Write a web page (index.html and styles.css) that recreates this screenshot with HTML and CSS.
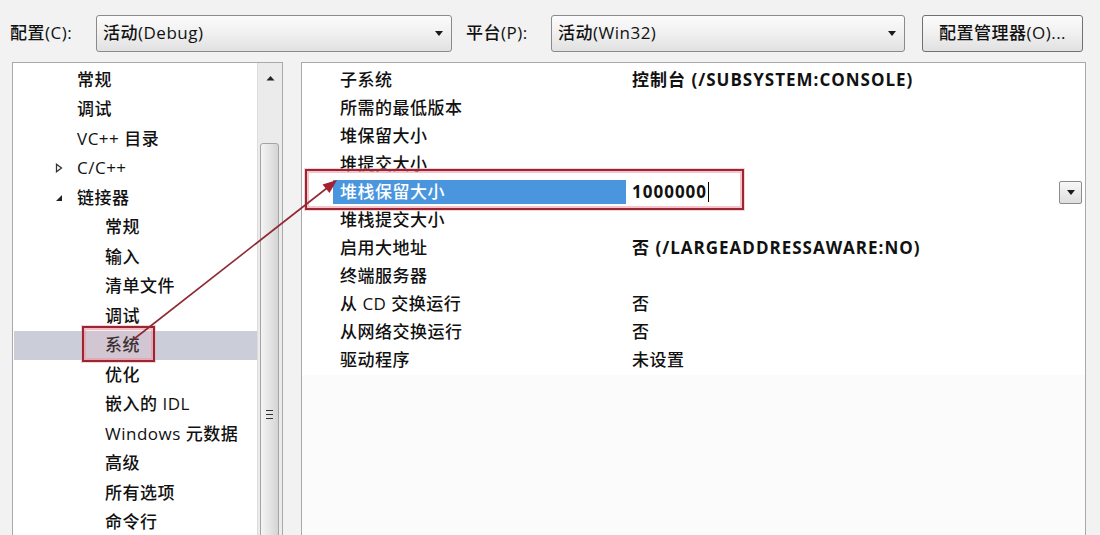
FILE: index.html
```html
<!DOCTYPE html>
<html lang="zh-CN">
<head>
    <meta charset="UTF-8">
    <title>属性页 - 链接器 系统</title>
    <link rel="stylesheet" href="styles.css">
</head>
<body>
<div class="toolbar">
    <span class="label label-config">配置(C):</span>
    <div class="combo combo-config"><span>活动(Debug)</span><i class="caret"></i></div>
    <span class="label label-platform">平台(P):</span>
    <div class="combo combo-platform"><span>活动(Win32)</span><i class="caret"></i></div>
    <div class="btn">配置管理器(O)...</div>
</div>
<div class="main">
    <div class="tree-panel">
        <ul class="tree">
            <li class="top">常规</li>
            <li class="top">调试</li>
            <li class="top">VC++ 目录</li>
            <li class="top"><span class="toggle"><svg width="8" height="10" viewBox="0 0 8 10"><path d="M1.5 1.2 L6.5 5 L1.5 8.8 Z" fill="none" stroke="#333" stroke-width="1.3"/></svg></span>C/C++</li>
            <li class="top"><span class="toggle"><svg width="8" height="8" viewBox="0 0 8 8"><path d="M7 1 L7 7 L1 7 Z" fill="#222"/></svg></span>链接器</li>
            <li class="sub">常规</li>
            <li class="sub">输入</li>
            <li class="sub">清单文件</li>
            <li class="sub">调试</li>
            <li class="sub active">系统</li>
            <li class="sub">优化</li>
            <li class="sub">嵌入的 IDL</li>
            <li class="sub">Windows 元数据</li>
            <li class="sub">高级</li>
            <li class="sub">所有选项</li>
            <li class="sub">命令行</li>
        </ul>
        <div class="scrollbar">
            <div class="sb-up"><svg width="9" height="6" viewBox="0 0 9 6"><path d="M0.5 5.5 L4.5 1 L8.5 5.5 Z" fill="#222"/></svg></div>
            <div class="sb-thumb"><span class="grip"></span></div>
        </div>
    </div>
    <div class="grid-panel">
        <div class="grid">
            <div class="row"><span class="name">子系统</span><span class="value strong">控制台 (/SUBSYSTEM:CONSOLE)</span></div>
            <div class="row"><span class="name">所需的最低版本</span><span class="value"></span></div>
            <div class="row"><span class="name">堆保留大小</span><span class="value"></span></div>
            <div class="row"><span class="name">堆提交大小</span><span class="value"></span></div>
            <div class="row selected"><span class="name">堆栈保留大小</span><span class="value strong">1000000<i class="cursor"></i></span><span class="drop"><i class="caret"></i></span></div>
            <div class="row"><span class="name">堆栈提交大小</span><span class="value"></span></div>
            <div class="row"><span class="name">启用大地址</span><span class="value strong">否 (/LARGEADDRESSAWARE:NO)</span></div>
            <div class="row"><span class="name">终端服务器</span><span class="value"></span></div>
            <div class="row"><span class="name">从 CD 交换运行</span><span class="value">否</span></div>
            <div class="row"><span class="name">从网络交换运行</span><span class="value">否</span></div>
            <div class="row"><span class="name">驱动程序</span><span class="value">未设置</span></div>
        </div>
    </div>
</div>
<!-- 标注：红框和箭头 -->
<div class="callout callout-tree"></div>
<div class="callout callout-row"></div>
<svg class="pointer" width="1100" height="535" viewBox="0 0 1100 535">
    <line x1="134" y1="339" x2="327" y2="188" stroke="#8e2a33" stroke-width="1.6"/>
    <polygon points="337,180 329.5,193 322.5,184.5" fill="#a3222e"/>
</svg>
</body>
</html>
```

FILE: styles.css
```css
*{margin:0;padding:0;list-style:none;box-sizing:border-box;}
html,body{width:1100px;height:535px;overflow:hidden;}
body{
    background:#f2f2f2;
    color:#111;
    font:500 17px/1.2 "Open Sans","Noto Sans CJK SC",sans-serif;
    letter-spacing:0.5px;
    position:relative;
}
.toolbar{
    height:62px;
    padding:4px 0 0 10px;
    display:flex;
    align-items:center;
}
.label{white-space:nowrap;}
.label-config{width:86px;}
.label-platform{width:85px;margin-left:14px;}
.combo,.btn{
    height:37px;
    border:1px solid #8a8a8a;
    border-radius:3px;
    background:linear-gradient(#fbfbfb,#f0f0f0 50%,#e1e1e1);
}
.combo{
    display:flex;
    align-items:center;
    justify-content:space-between;
    padding:0 8px 0 6px;
}
.combo-config{width:356px;}
.combo-platform{width:354px;}
.caret{
    width:0;height:0;
    border-left:4.5px solid transparent;
    border-right:4.5px solid transparent;
    border-top:5px solid #1a1a1a;
}
.btn{
    width:161px;
    margin-left:17px;
    display:flex;
    align-items:center;
    justify-content:center;
    border-color:#707070;
}
.main{
    display:flex;
    gap:18px;
    padding-left:12px;
}
.tree-panel{
    width:271px;
    height:480px;
    border:1px solid #a9a9a9;
    background:#fff;
    display:flex;
}
.tree{
    flex:1;
    padding-top:2px;
}
.tree li{
    height:29.5px;
    display:flex;
    align-items:center;
    white-space:nowrap;
    margin-left:1px;
}
.tree .top{padding-left:63px;}
.tree .sub{padding-left:91px;}
.tree .toggle{
    width:22px;
    margin-left:-22px;
    display:flex;
    align-items:center;
}
.tree .active{background:#cbcdd8;}
.scrollbar{
    width:25px;
    border-left:1px solid #dcdcdc;
    background:#ebebeb;
}
.sb-up{
    height:28px;
    display:flex;
    align-items:center;
    justify-content:center;
    padding-top:2px;
}
.sb-thumb{
    height:420px;
    margin:52px 3px 0 2px;
    border:1px solid #a4a4a4;
    border-radius:3px;
    background:linear-gradient(to right,#f4f4f4,#e2e2e2 60%,#d4d4d4);
    padding-top:266px;
    display:flex;
    justify-content:center;
}
.grip{
    width:7px;height:9px;
    border-top:1px solid #333;
    border-bottom:1px solid #333;
    background:linear-gradient(#333,#333) center/7px 1px no-repeat;
}
.grid-panel{
    width:785px;
    height:480px;
    border:1px solid #a9a9a9;
    background:#fbfbfc;
}
.grid{
    background:#fff;
    padding-top:3px;
    padding-bottom:1px;
}
.row{
    height:28px;
    display:flex;
    align-items:center;
    padding-left:31px;
    white-space:nowrap;
}
.row .name{
    width:293px;
    height:24px;
    display:flex;
    align-items:center;
    padding-left:7px;
}
.row .value{
    flex:1;
    padding-left:6px;
    display:flex;
    align-items:center;
}
.strong{font-weight:700;letter-spacing:1px;}
.row.selected .name{
    background:#4a96de;
    color:#fff;
}
.cursor{
    display:inline-block;
    width:1px;height:20px;
    background:#000;
    margin-left:1px;
}
.drop{
    width:23px;height:23px;
    margin-right:3px;
    border:1px solid #8c8c8c;
    border-radius:2px;
    background:linear-gradient(#f8f8f8,#dedede);
    display:flex;
    align-items:center;
    justify-content:center;
}
.callout{
    position:absolute;
    border:2px solid #9d2531;
    box-shadow:inset 0 0 0 2px rgba(236,150,160,.55),0 0 0 1px rgba(236,170,180,.5);
}
.callout-tree{
    left:82px;top:326px;
    width:73px;height:36px;
    background:rgba(235,170,185,.2);
}
.callout-row{
    left:305px;top:169px;
    width:439px;height:41px;
}
.pointer{
    position:absolute;
    left:0;top:0;
    pointer-events:none;
}
```
